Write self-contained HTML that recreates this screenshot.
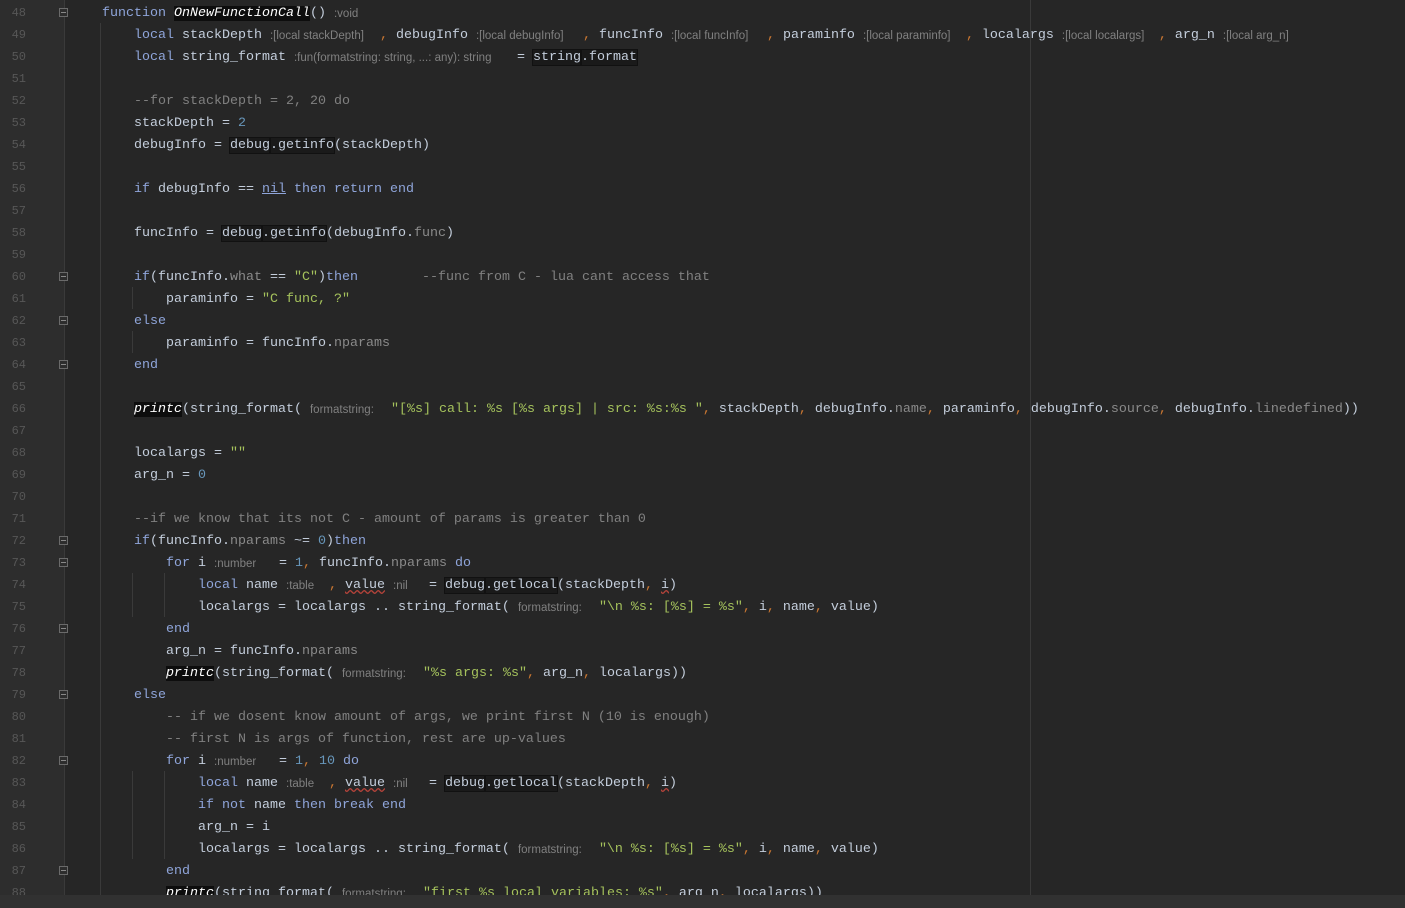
<!DOCTYPE html>
<html><head><meta charset="utf-8"><style>
html,body{margin:0;padding:0;width:1405px;height:908px;overflow:hidden;background:#262626}
.gut{position:absolute;left:0;top:0;width:64px;height:908px;background:#2d2d2d}
.gl{position:absolute;left:64px;top:0;width:1px;height:908px;background:#3a3a3a}
.rm{position:absolute;left:1030px;top:0;width:1px;height:895px;background:#3a3a3a}
.ig{position:absolute;width:1px;background:#3a3a3a}
.ln{position:absolute;left:0;width:26px;text-align:right;color:#575757;font:12px "Liberation Mono",monospace;line-height:22px;margin-top:1px}
.fold{position:absolute;left:59px;width:9px;height:9px;border:1px solid #6a6a6a;box-sizing:border-box;background:#2d2d2d}
.fold:after{content:"";position:absolute;left:1px;top:3px;width:5px;height:1px;background:#888}
.l{position:absolute;white-space:pre;font:13.33px "Liberation Mono",monospace;line-height:22px;color:#c4cedc;height:22px;margin-top:2px}
.k{color:#8fa5da}.s{color:#a5c25c}.n{color:#6897bb}.c{color:#808080}.f{color:#8a8a8a}.p{color:#cc7832}
.h{display:inline-block;font:11.5px "Liberation Sans",sans-serif;color:#808080;padding-left:8px;box-sizing:border-box;vertical-align:top;line-height:22px}
.b{background:#0d0d0d;font-style:italic;color:#fff}
.bx{outline:1px solid #111;background:#1a1a1a}
.u{text-decoration:underline}
.w{text-decoration:underline wavy #b5433a}
.bot{position:absolute;left:0;top:895px;width:1405px;height:13px;background:#313131}
</style></head><body>
<div class="gut"></div><div class="gl"></div><div class="rm"></div>
<div class="ig" style="left:100px;top:23px;height:880px"></div>
<div class="ig" style="left:132px;top:287px;height:22px"></div>
<div class="ig" style="left:132px;top:331px;height:22px"></div>
<div class="ig" style="left:132px;top:573px;height:44px"></div>
<div class="ig" style="left:164px;top:573px;height:44px"></div>
<div class="ig" style="left:132px;top:771px;height:88px"></div>
<div class="ig" style="left:164px;top:771px;height:88px"></div>

<div class="ln" style="top:1px">48</div><div class="ln" style="top:23px">49</div><div class="ln" style="top:45px">50</div><div class="ln" style="top:67px">51</div><div class="ln" style="top:89px">52</div><div class="ln" style="top:111px">53</div><div class="ln" style="top:133px">54</div><div class="ln" style="top:155px">55</div><div class="ln" style="top:177px">56</div><div class="ln" style="top:199px">57</div><div class="ln" style="top:221px">58</div><div class="ln" style="top:243px">59</div><div class="ln" style="top:265px">60</div><div class="ln" style="top:287px">61</div><div class="ln" style="top:309px">62</div><div class="ln" style="top:331px">63</div><div class="ln" style="top:353px">64</div><div class="ln" style="top:375px">65</div><div class="ln" style="top:397px">66</div><div class="ln" style="top:419px">67</div><div class="ln" style="top:441px">68</div><div class="ln" style="top:463px">69</div><div class="ln" style="top:485px">70</div><div class="ln" style="top:507px">71</div><div class="ln" style="top:529px">72</div><div class="ln" style="top:551px">73</div><div class="ln" style="top:573px">74</div><div class="ln" style="top:595px">75</div><div class="ln" style="top:617px">76</div><div class="ln" style="top:639px">77</div><div class="ln" style="top:661px">78</div><div class="ln" style="top:683px">79</div><div class="ln" style="top:705px">80</div><div class="ln" style="top:727px">81</div><div class="ln" style="top:749px">82</div><div class="ln" style="top:771px">83</div><div class="ln" style="top:793px">84</div><div class="ln" style="top:815px">85</div><div class="ln" style="top:837px">86</div><div class="ln" style="top:859px">87</div><div class="ln" style="top:881px">88</div>

<div class="fold" style="top:8px"></div><div class="fold" style="top:272px"></div><div class="fold" style="top:316px"></div><div class="fold" style="top:360px"></div><div class="fold" style="top:536px"></div><div class="fold" style="top:558px"></div><div class="fold" style="top:624px"></div><div class="fold" style="top:690px"></div><div class="fold" style="top:756px"></div><div class="fold" style="top:866px"></div>

<div class="l" style="left:102px;top:1px"><span class="k">function</span> <span class="b">OnNewFunctionCall</span>()<span class="h" style="width:40px">:void</span></div>
<div class="l" style="left:134px;top:23px"><span class="k">local</span> stackDepth<span class="h" style="width:118px">:[local stackDepth]</span><span class="p">,</span> debugInfo<span class="h" style="width:115px">:[local debugInfo]</span><span class="p">,</span> funcInfo<span class="h" style="width:104px">:[local funcInfo]</span><span class="p">,</span> paraminfo<span class="h" style="width:111px">:[local paraminfo]</span><span class="p">,</span> localargs<span class="h" style="width:105px">:[local localargs]</span><span class="p">,</span> arg_n<span class="h" style="width:90px">:[local arg_n]</span></div>
<div class="l" style="left:134px;top:45px"><span class="k">local</span> string_format<span class="h" style="width:231px">:fun(formatstring: string, ...: any): string</span>= <span class="bx">string</span><span class="bx">.format</span></div>
<div class="l c" style="left:134px;top:89px">--for stackDepth = 2, 20 do</div>
<div class="l" style="left:134px;top:111px">stackDepth = <span class="n">2</span></div>
<div class="l" style="left:134px;top:133px">debugInfo = <span class="bx">debug</span><span class="bx">.getinfo</span>(stackDepth)</div>
<div class="l" style="left:134px;top:177px"><span class="k">if</span> debugInfo == <span class="k u">nil</span> <span class="k">then return end</span></div>
<div class="l" style="left:134px;top:221px">funcInfo = <span class="bx">debug</span><span class="bx">.getinfo</span>(debugInfo.<span class="f">func</span>)</div>
<div class="l" style="left:134px;top:265px"><span class="k">if</span>(funcInfo.<span class="f">what</span> == <span class="s">"C"</span>)<span class="k">then</span>        <span class="c">--func from C - lua cant access that</span></div>
<div class="l" style="left:166px;top:287px">paraminfo = <span class="s">"C func, ?"</span></div>
<div class="l k" style="left:134px;top:309px">else</div>
<div class="l" style="left:166px;top:331px">paraminfo = funcInfo.<span class="f">nparams</span></div>
<div class="l k" style="left:134px;top:353px">end</div>
<div class="l" style="left:134px;top:397px"><span class="b">printc</span>(string_format(<span class="h" style="width:89px">formatstring:</span><span class="s">"[%s] call: %s [%s args] | src: %s:%s "</span><span class="p">,</span> stackDepth<span class="p">,</span> debugInfo.<span class="f">name</span><span class="p">,</span> paraminfo<span class="p">,</span> debugInfo.<span class="f">source</span><span class="p">,</span> debugInfo.<span class="f">linedefined</span>))</div>
<div class="l" style="left:134px;top:441px">localargs = <span class="s">""</span></div>
<div class="l" style="left:134px;top:463px">arg_n = <span class="n">0</span></div>
<div class="l c" style="left:134px;top:507px">--if we know that its not C - amount of params is greater than 0</div>
<div class="l" style="left:134px;top:529px"><span class="k">if</span>(funcInfo.<span class="f">nparams</span> ~= <span class="n">0</span>)<span class="k">then</span></div>
<div class="l" style="left:166px;top:551px"><span class="k">for</span> i<span class="h" style="width:73px">:number</span>= <span class="n">1</span><span class="p">,</span> funcInfo.<span class="f">nparams</span> <span class="k">do</span></div>
<div class="l" style="left:198px;top:573px"><span class="k">local</span> name<span class="h" style="width:51px">:table</span><span class="p">,</span> <span class="w">value</span><span class="h" style="width:44px">:nil</span>= <span class="bx">debug</span><span class="bx">.getlocal</span>(stackDepth<span class="p">,</span> <span class="w">i</span>)</div>
<div class="l" style="left:198px;top:595px">localargs = localargs .. string_format(<span class="h" style="width:89px">formatstring:</span><span class="s">"\n %s: [%s] = %s"</span><span class="p">,</span> i<span class="p">,</span> name<span class="p">,</span> value)</div>
<div class="l k" style="left:166px;top:617px">end</div>
<div class="l" style="left:166px;top:639px">arg_n = funcInfo.<span class="f">nparams</span></div>
<div class="l" style="left:166px;top:661px"><span class="b">printc</span>(string_format(<span class="h" style="width:89px">formatstring:</span><span class="s">"%s args: %s"</span><span class="p">,</span> arg_n<span class="p">,</span> localargs))</div>
<div class="l k" style="left:134px;top:683px">else</div>
<div class="l c" style="left:166px;top:705px">-- if we dosent know amount of args, we print first N (10 is enough)</div>
<div class="l c" style="left:166px;top:727px">-- first N is args of function, rest are up-values</div>
<div class="l" style="left:166px;top:749px"><span class="k">for</span> i<span class="h" style="width:73px">:number</span>= <span class="n">1</span><span class="p">,</span> <span class="n">10</span> <span class="k">do</span></div>
<div class="l" style="left:198px;top:771px"><span class="k">local</span> name<span class="h" style="width:51px">:table</span><span class="p">,</span> <span class="w">value</span><span class="h" style="width:44px">:nil</span>= <span class="bx">debug</span><span class="bx">.getlocal</span>(stackDepth<span class="p">,</span> <span class="w">i</span>)</div>
<div class="l" style="left:198px;top:793px"><span class="k">if not</span> name <span class="k">then break end</span></div>
<div class="l" style="left:198px;top:815px">arg_n = i</div>
<div class="l" style="left:198px;top:837px">localargs = localargs .. string_format(<span class="h" style="width:89px">formatstring:</span><span class="s">"\n %s: [%s] = %s"</span><span class="p">,</span> i<span class="p">,</span> name<span class="p">,</span> value)</div>
<div class="l k" style="left:166px;top:859px">end</div>
<div class="l" style="left:166px;top:881px"><span class="b">printc</span>(string_format(<span class="h" style="width:89px">formatstring:</span><span class="s">"first %s local variables: %s"</span><span class="p">,</span> arg_n<span class="p">,</span> localargs))</div>
<div class="bot"></div>
</body></html>
